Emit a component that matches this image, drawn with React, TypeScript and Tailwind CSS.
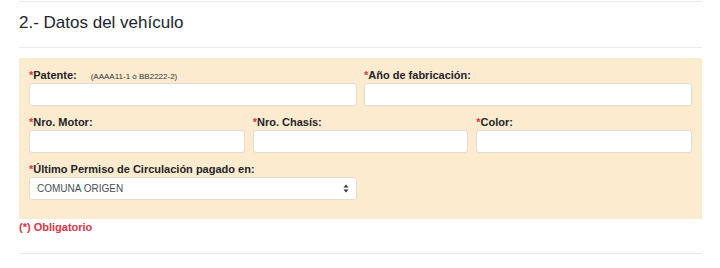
const FONT = "font-['Liberation_Sans',Arial,sans-serif]"

function Label({ text, hint }: { text: string; hint?: string }) {
  return (
    <label className="block h-[14px] mb-px text-[11px] leading-[14px] font-bold text-[#212529] whitespace-nowrap">
      <span className="text-[#dc3545]">*</span>
      {text}
      {hint && (
        <span className="ml-[14px] text-[8px] font-normal text-[#333]">{hint}</span>
      )}
    </label>
  )
}

function Field({ text, hint }: { text: string; hint?: string }) {
  return (
    <div className="min-w-0">
      <Label text={text} hint={hint} />
      <input
        type="text"
        className="block w-full h-[23px] bg-white border border-[#e3ddd3] rounded-[3px] outline-none"
      />
    </div>
  )
}

export default function App() {
  return (
    <div className={`${FONT} bg-white w-[720px] h-[268px] px-[19px] pt-px`}>
      <div className="w-[683px]">
        <div className="border-t border-[#e9ecef] pt-[10px] pb-[13px] border-b">
          <h2 className="text-[17px] leading-[22px] text-[#212529]">2.- Datos del vehículo</h2>
        </div>

        <div className="mt-[10px] bg-[#fdebd0] px-[10px] pt-[10px] pb-[19px] flex flex-col gap-[9px]">
          <div className="grid grid-cols-2 gap-x-[7px]">
            <Field text="Patente:" hint="(AAAA11-1 ó BB2222-2)" />
            <Field text="Año de fabricación:" />
          </div>
          <div className="grid grid-cols-3 gap-x-[8px]">
            <Field text="Nro. Motor:" />
            <Field text="Nro. Chasís:" />
            <Field text="Color:" />
          </div>
          <div className="grid grid-cols-2 gap-x-[7px]">
            <div>
              <Label text="Último Permiso de Circulación pagado en:" />
              <div className="flex items-center justify-between h-[23px] bg-white border border-[#e3ddd3] rounded-[3px] pl-[7px] pr-[7px]">
                <span className="text-[10px] text-[#495057]">COMUNA ORIGEN</span>
                <svg width="6" height="9" viewBox="0 0 6 9" className="text-[#333]">
                  <path d="M3 0.5 L5.5 3.5 L0.5 3.5 Z" fill="currentColor" />
                  <path d="M3 8.5 L5.5 5.5 L0.5 5.5 Z" fill="currentColor" />
                </svg>
              </div>
            </div>
            <div />
          </div>
        </div>

        <div className="pt-px pb-[19px] border-b border-[#e9ecef] text-[11px] leading-[14px] font-bold text-[#dc3545]">
          (*) Obligatorio
        </div>
      </div>
    </div>
  )
}
